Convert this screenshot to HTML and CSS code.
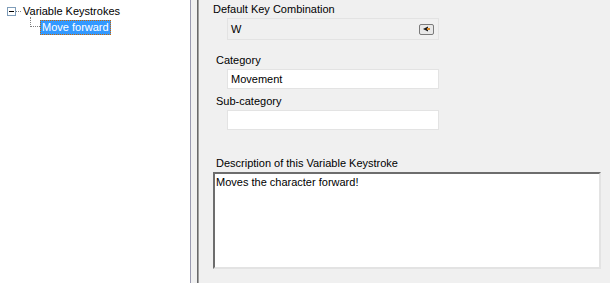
FILE: index.html
```html
<!DOCTYPE html>
<html lang="en">
<head>
    <meta charset="UTF-8">
    <title>Variable Keystrokes</title>
    <link rel="stylesheet" href="styles.css">
</head>
<body>
    <div class="window">
        <div class="tree">
            <div class="node root">
                <span class="expander"></span>
                <span class="hline"></span>
                <span class="label">Variable Keystrokes</span>
            </div>
            <div class="node child">
                <span class="connector"></span>
                <span class="label selected">Move forward</span>
            </div>
        </div>
        <div class="splitter"></div>
        <div class="details">
            <div class="caption first">Default Key Combination</div>
            <div class="field disabled">
                <span>W</span>
                <span class="clear-btn">
                    <svg width="9" height="6" viewBox="0 0 9 6">
                        <path d="M1 3 L6 0.5 L6 5.5 Z" fill="#1a1a1a"/>
                        <rect x="5" y="2" width="3" height="2" fill="#d88a2a"/>
                    </svg>
                </span>
            </div>
            <div class="caption">Category</div>
            <div class="field">Movement</div>
            <div class="caption sub">Sub-category</div>
            <div class="field"></div>
            <div class="caption desc">Description of this Variable Keystroke</div>
            <div class="memo">Moves the character forward!</div>
        </div>
    </div>
</body>
</html>
```

FILE: styles.css
```css
body {
    margin: 0;
    font-family: "Liberation Sans", Arial, sans-serif;
    font-size: 11px;
    color: #000;
    background: #f0f0f0;
    overflow: hidden;
}

.window {
    display: flex;
    height: 283px;
    width: 610px;
}

/* tree view on the left */
.tree {
    width: 191px;
    background: #fff;
    border-right: 1px solid #9a9ab0;
    padding-top: 4px;
    box-sizing: border-box;
}
.node {
    display: flex;
    align-items: center;
    height: 14px;
}
.root {
    padding-left: 7px;
}
.expander {
    width: 7px;
    height: 7px;
    border: 1px solid #7f9db9;
    position: relative;
    background: #fff;
}
.expander::after {
    content: "";
    position: absolute;
    left: 1px;
    top: 3px;
    width: 5px;
    height: 1px;
    background: #000;
}
.hline {
    width: 5px;
    border-top: 1px dotted #808080;
}
.child {
    margin-top: 1px;
    padding-left: 30px;
    align-items: flex-start;
}
.connector {
    width: 9px;
    height: 9px;
    border-left: 1px dotted #808080;
    border-bottom: 1px dotted #808080;
    margin-top: -2px;
}
.label {
    line-height: 13px;
    padding: 0 2px;
    white-space: nowrap;
}
.selected {
    background: #3399ff;
    color: #fff;
    border: 1px dotted #cc6600;
    padding: 0 1px;
    margin-top: 1px;
}

/* splitter */
.splitter {
    width: 6px;
    border-right: 1px solid #696969;
}

/* details panel */
.details {
    flex: 1;
    border-left: 1px solid #a0a0a0;
    padding-left: 14px;
}
.caption {
    line-height: 13px;
    margin-top: 14px;
    padding-left: 3px;
}
.caption.first {
    margin-top: 3px;
    padding-left: 0;
}
.caption.sub {
    margin-top: 6px;
}
.caption.desc {
    margin-top: 27px;
}
.field {
    margin-left: 14px;
    width: 212px;
    height: 20px;
    box-sizing: border-box;
    border: 1px solid #e3e3e3;
    background: #fff;
    padding: 2px 3px;
    line-height: 14px;
    margin-top: 2px;
    display: flex;
    align-items: center;
}
.field.disabled {
    background: #f0f0f0;
    height: 22px;
    justify-content: space-between;
    padding-right: 4px;
}
.clear-btn {
    width: 13px;
    height: 9px;
    border: 1px solid #7a7a7a;
    border-radius: 2px;
    background: #e8e8e8;
    display: flex;
    align-items: center;
    justify-content: center;
}
.memo {
    margin-top: 2px;
    width: 388px;
    height: 97px;
    box-sizing: border-box;
    background: #fff;
    border-top: 2px solid #6d6d6d;
    border-left: 2px solid #6d6d6d;
    border-right: 2px solid #e3e3e3;
    border-bottom: 2px solid #e3e3e3;
    padding: 2px 1px;
    line-height: 13px;
}
```
